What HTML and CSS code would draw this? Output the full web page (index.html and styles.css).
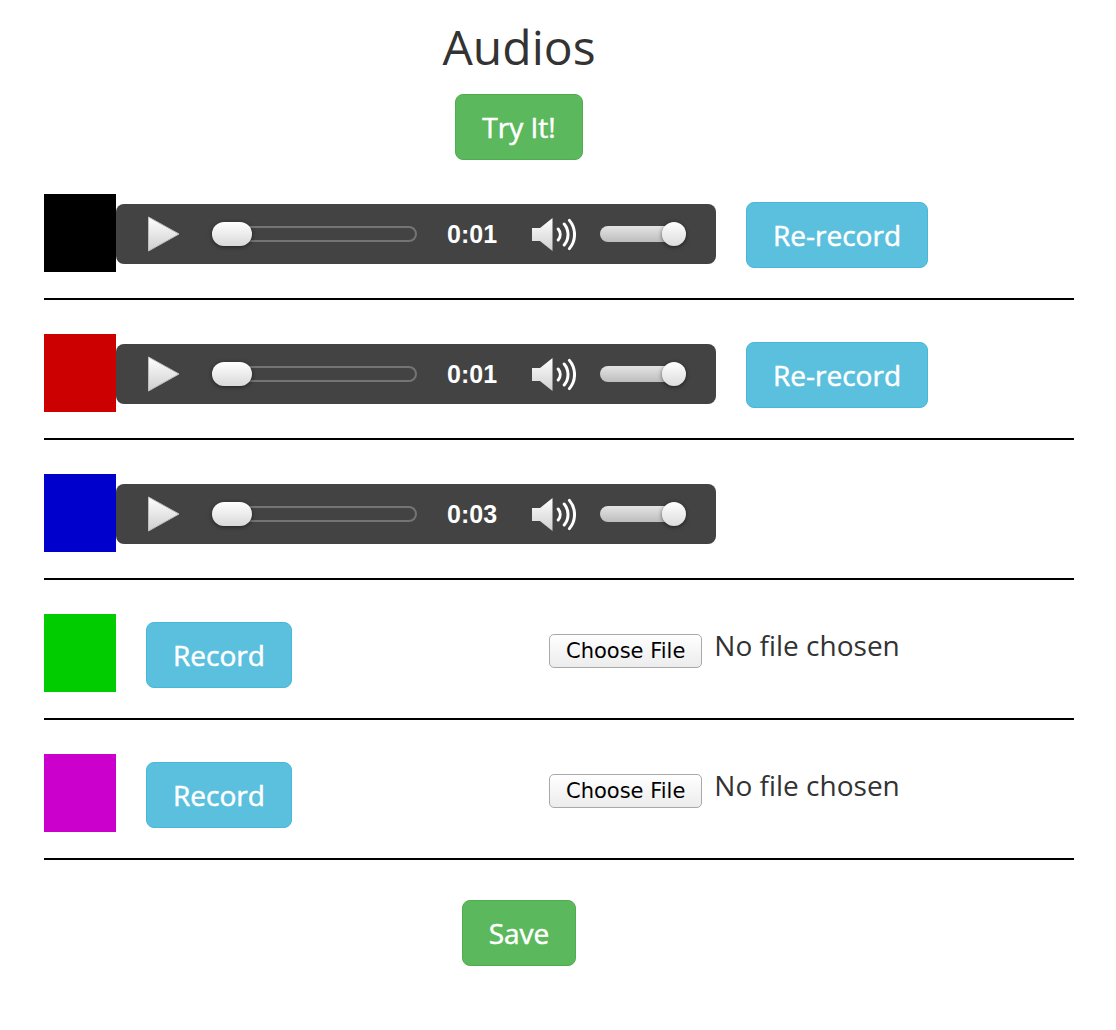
FILE: index.html
```html
<!DOCTYPE html>
<html>
<head>
<meta charset="utf-8">
<title>Audios</title>
<link rel="stylesheet" href="styles.css">
</head>
<body>
<svg class="defs" width="0" height="0" aria-hidden="true">
  <defs>
    <linearGradient id="gWhite" x1="0" y1="0" x2="0" y2="1">
      <stop offset="0" stop-color="#ffffff"/>
      <stop offset="1" stop-color="#cfcfcf"/>
    </linearGradient>
  </defs>
</svg>
<div class="page">
  <div class="head">
    <h1 class="title">Audios</h1>
    <button class="btn btn-success">Try It!</button>
  </div>

  <div class="rows">
    <div class="row">
      <div class="swatch swatch-black"></div>
      <div class="player">
        <svg class="play" width="33" height="36" viewBox="0 0 33 36"><polygon points="1.5,1 32,18 1.5,35" fill="url(#gWhite)" stroke="#bdbdbd" stroke-width="1" stroke-linejoin="round"/></svg>
        <div class="track"><span class="pill"></span></div>
        <span class="time">0:01</span>
        <svg class="speaker" width="45" height="35" viewBox="0 0 45 35"><polygon points="1,11 9,11 21.5,1 21.5,34 9,24 1,24" fill="url(#gWhite)"/><path d="M27.2 12 A8.6 8.6 0 0 1 27.2 23 M33.2 7 A16.4 16.4 0 0 1 33.2 28 M38.4 3.4 A21.9 21.9 0 0 1 38.4 31.6" fill="none" stroke="#fff" stroke-width="3" stroke-linecap="round"/></svg>
        <div class="vol"><span class="vol-track"></span><span class="vol-knob"></span></div>
      </div>
      <button class="btn btn-info rerec">Re-record</button>
    </div>

    <div class="row">
      <div class="swatch swatch-red"></div>
      <div class="player">
        <svg class="play" width="33" height="36" viewBox="0 0 33 36"><polygon points="1.5,1 32,18 1.5,35" fill="url(#gWhite)" stroke="#bdbdbd" stroke-width="1" stroke-linejoin="round"/></svg>
        <div class="track"><span class="pill"></span></div>
        <span class="time">0:01</span>
        <svg class="speaker" width="45" height="35" viewBox="0 0 45 35"><polygon points="1,11 9,11 21.5,1 21.5,34 9,24 1,24" fill="url(#gWhite)"/><path d="M27.2 12 A8.6 8.6 0 0 1 27.2 23 M33.2 7 A16.4 16.4 0 0 1 33.2 28 M38.4 3.4 A21.9 21.9 0 0 1 38.4 31.6" fill="none" stroke="#fff" stroke-width="3" stroke-linecap="round"/></svg>
        <div class="vol"><span class="vol-track"></span><span class="vol-knob"></span></div>
      </div>
      <button class="btn btn-info rerec">Re-record</button>
    </div>

    <div class="row">
      <div class="swatch swatch-blue"></div>
      <div class="player">
        <svg class="play" width="33" height="36" viewBox="0 0 33 36"><polygon points="1.5,1 32,18 1.5,35" fill="url(#gWhite)" stroke="#bdbdbd" stroke-width="1" stroke-linejoin="round"/></svg>
        <div class="track"><span class="pill"></span></div>
        <span class="time">0:03</span>
        <svg class="speaker" width="45" height="35" viewBox="0 0 45 35"><polygon points="1,11 9,11 21.5,1 21.5,34 9,24 1,24" fill="url(#gWhite)"/><path d="M27.2 12 A8.6 8.6 0 0 1 27.2 23 M33.2 7 A16.4 16.4 0 0 1 33.2 28 M38.4 3.4 A21.9 21.9 0 0 1 38.4 31.6" fill="none" stroke="#fff" stroke-width="3" stroke-linecap="round"/></svg>
        <div class="vol"><span class="vol-track"></span><span class="vol-knob"></span></div>
      </div>
    </div>

    <div class="row">
      <div class="swatch swatch-green"></div>
      <div class="rec-slot"><button class="btn btn-info">Record</button></div>
      <button class="file-btn">Choose File</button>
      <span class="file-label">No file chosen</span>
    </div>

    <div class="row">
      <div class="swatch swatch-magenta"></div>
      <div class="rec-slot"><button class="btn btn-info">Record</button></div>
      <button class="file-btn">Choose File</button>
      <span class="file-label">No file chosen</span>
    </div>
  </div>

  <div class="foot">
    <button class="btn btn-success">Save</button>
  </div>
</div>
</body>
</html>
```

FILE: styles.css
```css
* { box-sizing: border-box; }

html, body {
  margin: 0;
  padding: 0;
  background: #fff;
}

body {
  font-family: "Open Sans", "Liberation Sans", sans-serif;
  color: #333;
}

.defs { position: absolute; }

.page {
  width: 1074px;
  padding-left: 44px;
}

.head {
  width: 950px;
  text-align: center;
}

.title {
  margin: 0;
  padding-top: 19px;
  font-size: 48px;
  line-height: 56px;
  font-weight: 400;
  color: #333;
}

.head .btn { margin-top: 19px; }

.btn {
  display: inline-block;
  font-family: "Open Sans", sans-serif;
  font-size: 28px;
  line-height: 40px;
  padding: 12px 26px;
  border: 1px solid;
  border-radius: 8px;
  color: #fff;
  font-weight: 400;
  -webkit-text-stroke: 0.5px #fff;
  cursor: pointer;
}

.btn-success { background: #5cb85c; border-color: #4cae4c; }
.btn-info { background: #5bc0de; border-color: #46b8da; }

.rows { width: 1030px; }

.row {
  display: flex;
  align-items: flex-start;
  padding: 34px 0 26px;
  border-bottom: 2px solid #000;
  height: 140px;
}

.swatch {
  width: 72px;
  height: 78px;
  flex: none;
}
.swatch-black { background: #000; }
.swatch-red { background: #cc0000; }
.swatch-blue { background: #0000cc; }
.swatch-green { background: #00cc00; }
.swatch-magenta { background: #cc00cc; }

.player {
  margin-top: 10px;
  width: 600px;
  height: 60px;
  background: #434343;
  border-radius: 8px;
  display: flex;
  align-items: center;
  flex: none;
}

.play {
  display: block;
  margin-left: 31px;
  flex: none;
}

.track {
  position: relative;
  margin-left: 32px;
  width: 205px;
  height: 16px;
  border: 2px solid #747474;
  border-radius: 8px;
  flex: none;
}

.pill {
  position: absolute;
  left: -2px;
  top: -6px;
  width: 40px;
  height: 24px;
  border-radius: 12px;
  background: linear-gradient(#ffffff, #d9d9d9);
  box-shadow: 0 1px 4px rgba(0,0,0,0.5);
}

.time {
  margin-left: 30px;
  font-family: "Liberation Sans", Arial, sans-serif;
  font-weight: 700;
  font-size: 25px;
  line-height: 1;
  color: #fff;
  width: 51px;
  flex: none;
}

.speaker {
  display: block;
  margin-left: 33px;
  flex: none;
}

.vol {
  position: relative;
  margin-left: 24px;
  width: 86px;
  height: 24px;
  display: flex;
  align-items: center;
  flex: none;
}

.vol-track {
  display: block;
  width: 80px;
  height: 16px;
  border-radius: 8px;
  background: linear-gradient(#e4e4e4, #bdbdbd);
}

.vol-knob {
  position: absolute;
  left: 62px;
  top: 0;
  width: 24px;
  height: 24px;
  border-radius: 50%;
  background: linear-gradient(#ffffff, #dcdcdc);
  box-shadow: 0 1px 4px rgba(0,0,0,0.55);
}

.rerec {
  margin-left: 30px;
  margin-top: 8px;
}

.rec-slot {
  width: 433px;
  padding-left: 30px;
  padding-top: 8px;
  flex: none;
}

.file-btn {
  margin-top: 20px;
  height: 34px;
  padding: 0 16px;
  font-family: "DejaVu Sans", "Liberation Sans", sans-serif;
  font-size: 21px;
  line-height: 32px;
  color: #000;
  background: linear-gradient(#ffffff, #ececec);
  border: 1px solid #a9a9a9;
  border-radius: 5px;
  flex: none;
}

.file-label {
  margin-left: 12px;
  margin-top: 11px;
  font-size: 28px;
  line-height: 40px;
  color: #333;
}

.foot {
  width: 950px;
  text-align: center;
  padding-top: 40px;
}
```
